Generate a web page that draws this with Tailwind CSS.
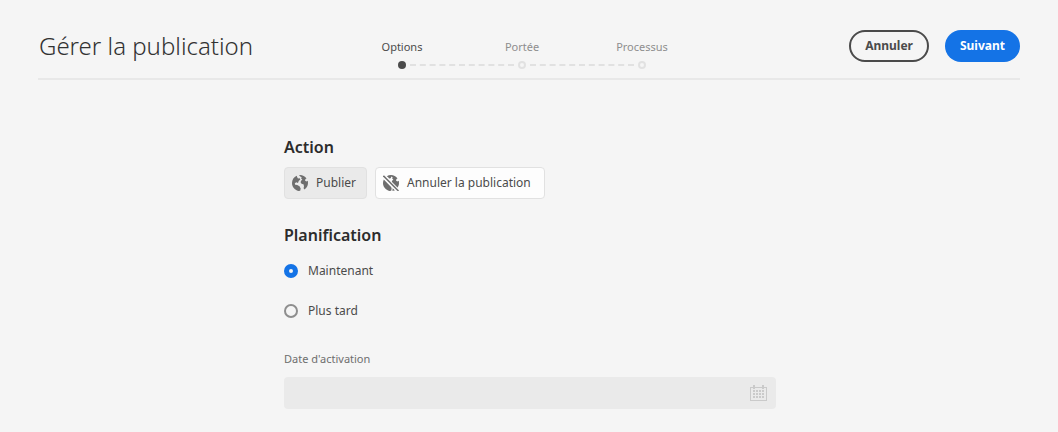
<!DOCTYPE html>
<html lang="fr">
<head>
<meta charset="utf-8">
<meta name="viewport" content="width=device-width, initial-scale=1">
<title>Gérer la publication</title>
<script src="https://cdn.jsdelivr.net/npm/@tailwindcss/browser@4"></script>
</head>
<body class="min-h-screen bg-[#f5f5f5] font-['Noto_Sans','Open_Sans',sans-serif] text-xs text-[#4b4b4b]">
<header class="mx-[38px] grid grid-cols-[303px_360px_1fr] border-b-2 border-[#e8e8e8] pt-[30px] pb-2 pl-px">
  <h1 class="h-8 text-2xl leading-8 font-light whitespace-nowrap text-[#323232]">Gérer la publication</h1>
  <ol class="grid grid-cols-3 pt-2 text-[11px] leading-[18px] text-[#8e8e8e]">
    <li class="relative flex flex-col items-center gap-1 text-[#4b4b4b]" aria-current="step">
      <span>Options</span>
      <span class="my-px size-2 rounded-full bg-[#4b4b4b]"></span>
      <svg class="absolute top-[26px] left-[68px] h-0.5 w-[104px] text-[#e1e1e1]" viewBox="0 0 104 2"><path d="M0 1H104" stroke="currentColor" stroke-width="2" stroke-dasharray="6 3.8"/></svg>
    </li>
    <li class="relative flex flex-col items-center gap-1">
      <span>Portée</span>
      <span class="my-px size-2 rounded-full border-2 border-[#e1e1e1]"></span>
      <svg class="absolute top-[26px] left-[68px] h-0.5 w-[104px] text-[#e1e1e1]" viewBox="0 0 104 2"><path d="M0 1H104" stroke="currentColor" stroke-width="2" stroke-dasharray="6 3.8"/></svg>
    </li>
    <li class="flex flex-col items-center gap-1">
      <span>Processus</span>
      <span class="my-px size-2 rounded-full border-2 border-[#e1e1e1]"></span>
    </li>
  </ol>
  <div class="flex h-8 justify-end gap-4">
    <button type="button" class="rounded-full border-2 border-[#4b4b4b] px-3.5 font-bold">Annuler</button>
    <button type="button" class="rounded-full bg-[#1473e6] px-[15px] font-bold text-white">Suivant</button>
  </div>
</header>
<main class="mx-auto mt-[55px] w-full max-w-[494px] pl-0.5">
  <h2 class="text-base leading-6 font-semibold text-[#2c2c2c]">Action</h2>
  <div class="mt-2 flex gap-2">
    <button type="button" aria-pressed="true" class="flex h-8 items-center gap-2 rounded border border-[#e1e1e1] bg-[#eaeaea] pr-2.5 pl-[7px]">
      <svg class="size-4 text-[#6e6e6e]" viewBox="0 0 16 16" fill="currentColor"><path d="M4.700.7C1.900 1.900 0 4.700 0 8c0 3.900 2.700 7.100 6.400 7.900l1.800-.1.500-2.300-1.200-2.300-2.300-1.300-2-.2-.4-1.500 1.500-.9 1.700.6.700-1.800L8.300 4.400 7.700 3.200 6 3.600 5.200 2.200z"/><path d="M7 .1 8.300 1.600 9.600 2.300 9.200 3.700 10.400 4.600 8.900 6 8.700 7.800 10 9 11.500 9.200 12 11.300 11.600 13.200 12.400 14.600C14.600 13.200 16 10.800 16 8c0-.8-.1-1.500-.3-2.200L14.300 6.600 13 5.400 13.500 3.900 14.500 3.400C13 1.300 10.700 0 8 0z"/></svg>
      <span>Publier</span>
    </button>
    <button type="button" aria-pressed="false" class="flex h-8 items-center gap-2 rounded border border-[#e1e1e1] bg-[#fdfdfd] pr-[13px] pl-[7px]">
      <svg class="size-4 text-[#6e6e6e]" viewBox="0 0 16 16" fill="currentColor"><path d="M.8 4.600C.3 5.600 0 6.800 0 8c0 3.900 2.700 7.100 6.400 7.900l1.800-.1.500-2.300-.6-1.600z"/><path d="M3.800 1.200 5.200 2.200 6 3.600 7.700 3.200 8.300 1.600 9.600 2.300 9.200 3.700 10.400 4.600 8.900 6 8.700 7.600 14.100 13C15.300 11.700 16 9.900 16 8c0-.8-.1-1.500-.3-2.200L14.300 6.600 13 5.400 13.500 3.900 14.500 3.400C13 1.300 10.700 0 8 0 6.500 0 5.100.4 3.800 1.200z"/><path d="M9.600 13.200 12 15.200 9.500 15.900z"/><path d="M.4.900 15.500 16" stroke="#fdfdfd" stroke-width="3.600"/><path d="M.4.900 15.500 16" stroke="currentColor" stroke-width="1.500"/></svg>
      <span>Annuler la publication</span>
    </button>
  </div>
  <h2 class="mt-6 text-base leading-6 font-semibold text-[#2c2c2c]">Planification</h2>
  <fieldset class="mt-[14px] flex flex-col items-start gap-5" aria-label="Planification">
    <label class="flex h-5 items-center gap-2.5"><input type="radio" name="planning" checked class="size-3.5 appearance-none rounded-full border-2 border-[#8e8e8e] bg-[#f5f5f5] checked:border-5 checked:border-[#1473e6]">Maintenant</label>
    <label class="flex h-5 items-center gap-2.5"><input type="radio" name="planning" class="size-3.5 appearance-none rounded-full border-2 border-[#8e8e8e] bg-[#f5f5f5] checked:border-5 checked:border-[#1473e6]">Plus tard</label>
  </fieldset>
  <label for="activation" class="mt-7 block text-[11px] leading-5 text-[#6e6e6e]">Date d'activation</label>
  <div class="mt-2 flex h-8 items-center rounded bg-[#eaeaea] pr-2">
    <input id="activation" type="text" disabled class="h-full min-w-0 flex-1 bg-transparent px-3">
    <button type="button" disabled aria-label="Ouvrir le calendrier" class="text-[#cacaca]">
      <svg class="h-4 w-[18px]" viewBox="0 0 18 16" fill="currentColor" shape-rendering="crispEdges"><path fill-rule="evenodd" d="M0 2H3V0H5V2H12V0H14V2H17V16H0ZM1 3V15H16V3H14V4H12V3H5V4H3V3Z"/><path d="M3 6H14M3 9H14M3 12H14" stroke="currentColor" stroke-width="2" stroke-dasharray="2 1"/></svg>
    </button>
  </div>
</main>
</body>
</html>
